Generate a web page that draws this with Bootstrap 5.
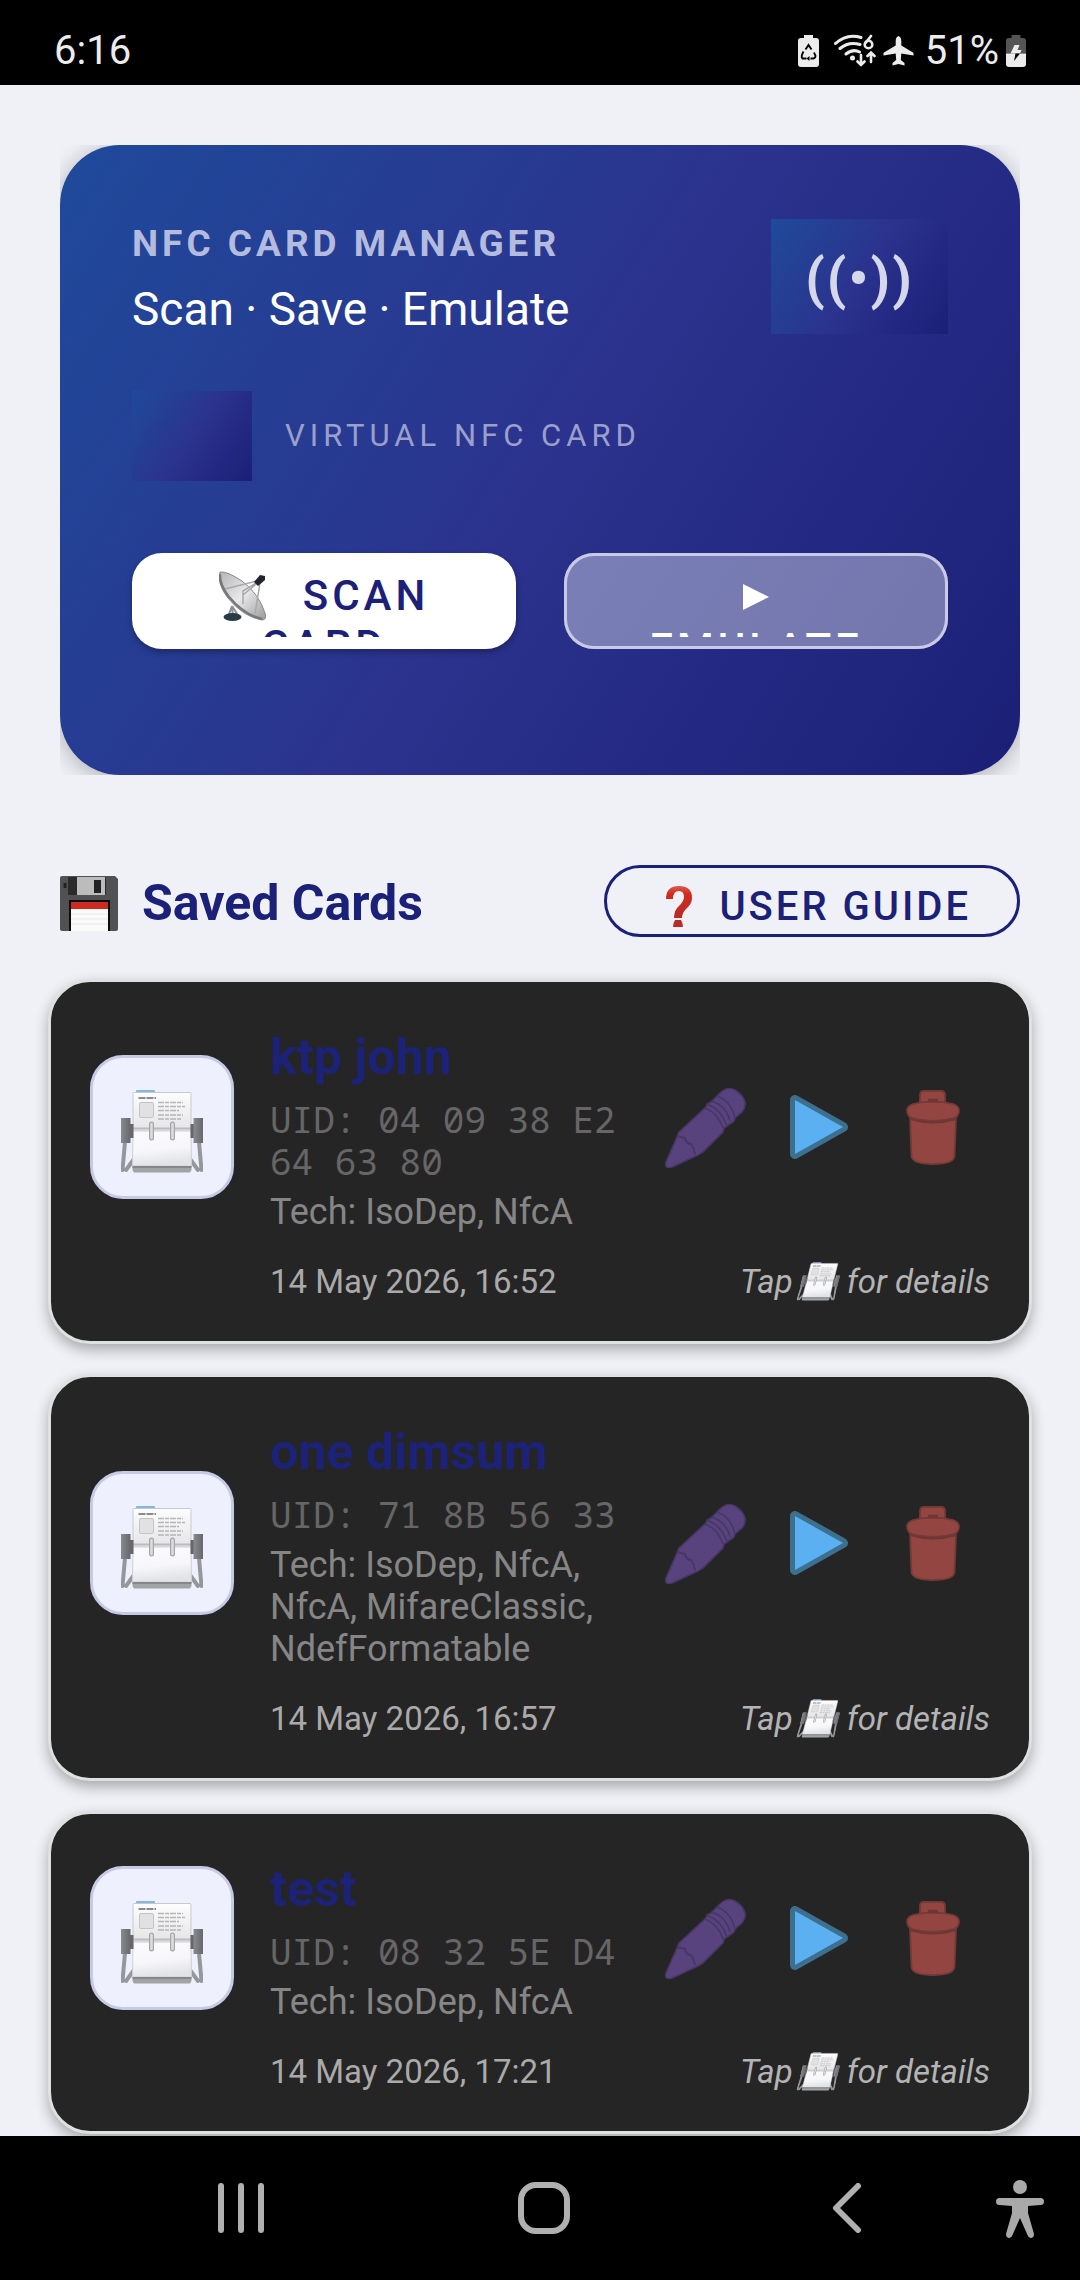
<!DOCTYPE html>
<html lang="en">
<head>
<meta charset="utf-8">
<meta name="viewport" content="width=device-width, initial-scale=1">
<title>NFC Card Manager</title>
<link href="https://cdn.jsdelivr.net/npm/bootstrap@5.3.0/dist/css/bootstrap.min.css" rel="stylesheet">
<style>
  :root { --navy: #1b2178; --fade: #1f4a9b 0%, #2b338e 50%, #1b1f76 100%; }
  body { background: #f0f1f6; font-family: Roboto, "Noto Sans", sans-serif; }
  svg { display: block; flex: none; }

  .statusbar { background: #000; color: #ececec; height: 85px; padding: 16px 54px 0; font-size: 40px; line-height: 70px; }
  .status-icons { gap: 7px; }

  .page { padding: 60px 48px 2px; }

  .hero-clip { margin: 0 12px; overflow: hidden; }
  .hero { min-height: 630px; padding: 74px 72px 0; border-radius: 60px; background: linear-gradient(123deg, var(--fade)); box-shadow: 0 4px 24px rgba(0,0,0,.28); }
  .hero-eyebrow { margin: 0; color: #b3bbde; font-size: 37px; line-height: 50px; font-weight: 700; letter-spacing: 4px; }
  .hero-title { margin: 0; color: #fff; font-size: 46px; line-height: 60px; padding-top: 10px; }
  .wave { background: linear-gradient(123deg, var(--fade)); color: #d5d7ea; width: 177px; height: 115px; font-size: 56px; line-height: 120px; font-weight: 700; letter-spacing: 2px; text-align: center; }
  .chip { background: linear-gradient(124deg, var(--fade)); width: 120px; height: 90px; }
  .chip-row { gap: 33px; margin-top: 52px; }
  .chip-label { color: #9a9fcb; font-size: 31px; letter-spacing: 5px; }
  .hero-actions { gap: 48px; margin-top: 72px; }
  .hero-btn { flex: 1 1 0; height: 96px; padding: 18px 40px 12px; border: 0; border-radius: 30px; font-size: 42px; line-height: 50px; font-weight: 500; letter-spacing: 4px; text-align: center; }
  .hero-btn .label-clip { display: block; height: 66px; overflow: hidden; }
  .hero-btn .label-line { display: flex; justify-content: center; align-items: center; height: 50px; }
  .btn-scan { background: #fff; color: var(--navy); box-shadow: 0 3px 6px rgba(0,0,0,.3); }
  .btn-scan .label-line { gap: 36px; }
  .btn-emulate { background: rgba(255,255,255,.38); color: #fff; box-shadow: inset 0 0 0 3px #c9cbe6; }
  .btn-emulate .label-line { height: 52px; }

  .section-head { margin: 90px 12px 42px; }
  .section-title { margin: 0; padding-top: 4px; gap: 24px; color: var(--navy); font-size: 50px; line-height: 60px; font-weight: 700; }
  .btn-guide { height: 72px; padding: 11px 46px 0 58px; gap: 26px; border: 3px solid var(--navy); border-radius: 36px; background: transparent; color: var(--navy); font-size: 40px; line-height: 56px; font-weight: 500; letter-spacing: 3px; }

  .saved-list { gap: 30px; }
  .saved { padding: 39px 39px 40px; border: 3px solid #dfe0e0; border-radius: 42px; background: #252525; box-shadow: 0 6px 14px rgba(0,0,0,.3); }
  .tile { width: 144px; height: 144px; padding: 8px 0 0; border: 3px solid #c5cae6; border-radius: 33px; background: #eef0fe; }
  .saved-text { padding-left: 36px; min-width: 0; }
  .saved-name { margin: 0 0 12px; padding-top: 6px; color: #1c2277; font-size: 50px; line-height: 60px; font-weight: 700; }
  .saved-uid { margin: 0 0 8px; color: #666; font: 36px/42px "Droid Sans Mono", "Noto Sans Mono", "DejaVu Sans Mono", monospace; }
  .saved-tech { margin: 0; color: #868686; font-size: 36px; line-height: 42px; }
  .saved-foot { margin-top: 29px; padding-left: 180px; color: #aaa; font-size: 33px; line-height: 39px; }
  .saved-hint { gap: 5px; color: #b4b4b4; }
  .slanted { transform: skewX(-14deg); margin: 0 3px; }
  .act { width: 114px; height: 114px; padding: 0; border: 0; background: transparent; }

  .navbar-sys { background: #000; height: 144px; }
  .navbar-sys button { padding: 0; border: 0; background: transparent; }
  .nav-slot { flex: 1 1 0; }
  .nav-inner { padding: 0 82px 0 90px; }
  .nav-access { right: 32px; top: 40px; }
</style>
<script src="https://cdn.jsdelivr.net/npm/bootstrap@5.3.0/dist/js/bootstrap.bundle.min.js"></script>
</head>
<body class="d-flex flex-column min-vh-100">

<svg width="0" height="0" class="position-absolute" aria-hidden="true">
  <defs>
    <linearGradient id="gPage" x1="0" y1="0" x2="0" y2="1"><stop offset="0" stop-color="#fdfdfd"/><stop offset="1" stop-color="#e3e3e5"/></linearGradient>
    <linearGradient id="gFront" x1="0" y1="0" x2="0.2" y2="1"><stop offset="0" stop-color="#fbfbff"/><stop offset=".6" stop-color="#f7f7fb"/><stop offset="1" stop-color="#e2e3e6"/></linearGradient>
    <linearGradient id="gWheel" x1="0" y1="0" x2="1" y2="0"><stop offset="0" stop-color="#8a8b8e"/><stop offset="1" stop-color="#66676a"/></linearGradient>
    <linearGradient id="gDish" x1="0" y1="0" x2="1" y2="1"><stop offset="0" stop-color="#b4b4b6"/><stop offset=".5" stop-color="#e9e9eb"/><stop offset="1" stop-color="#9a9a9c"/></linearGradient>
    <linearGradient id="gRed" x1="0" y1="0" x2="0" y2="1"><stop offset="0" stop-color="#e0584c"/><stop offset=".25" stop-color="#cf2b20"/><stop offset="1" stop-color="#b92c25"/></linearGradient>
    <symbol id="rolodex" viewBox="0 0 82 83">
      <path d="M4 52L1.5 80M5 80L13 69M78 52L80.5 80M77 80L69 69" stroke="#96979a" stroke-width="4" stroke-linecap="round" fill="none"/>
      <rect x="15" y="0" width="19" height="6" rx="1" fill="#85b8df"/>
      <rect x="12" y="2.500" width="58" height="40" rx="1" fill="url(#gPage)" stroke="#c9c9cc"/>
      <path d="M17.500 8H35" stroke="#8b8b8e" stroke-width="2" stroke-dasharray="7 1"/>
      <rect x="18.500" y="12.500" width="14" height="15" rx="1.500" fill="#e1e1e3" stroke="#c4c4c7"/>
      <path d="M37 12.500H62M37 16.500H64M37 20.500H58M37 25H62M37 29H60" stroke="#b5b5b8" stroke-width="1.400" stroke-dasharray="6 1 4 1"/>
      <path d="M12 38.500H70" stroke="#bcbcbf" stroke-width="2"/>
      <path d="M12 41H70L70.500 76H11.500Z" fill="url(#gFront)" stroke="#cfcfd2"/>
      <path d="M11.500 76H70.500V80L69 82.500H13L11.500 80Z" fill="#a2a3a5"/>
      <path d="M11.500 77H70.500" stroke="#7d7e80" stroke-width="1.500"/>
      <path d="M30.500 34V48M51.500 34V48" stroke="#a4a5a8" stroke-width="5" stroke-linecap="round"/>
      <path d="M30.500 34V48M51.500 34V48" stroke="#dedee0" stroke-width="2.500" stroke-linecap="round"/>
      <path d="M9 34H12.500V48H9ZM69.500 34H73V48H69.500Z" fill="#66676a"/>
      <rect x="0" y="28" width="9.500" height="25" fill="url(#gWheel)"/>
      <rect x="72.500" y="28" width="9.500" height="25" fill="url(#gWheel)"/>
    </symbol>
    <symbol id="pencil" viewBox="0 0 81 81">
      <g fill="#59437f" stroke="#463764" stroke-width="1.600" stroke-linejoin="round">
        <path d="M1 79Q0 77 1 75L12 50L14 45L40 21Q42 19 42 17L46 15L55 6Q62 -1 70 3Q78 8 80 15Q81 20 77 25L70 31L69 34L62 39L59 41L58 45L38 65L33 68L5 81Q2 81 1 79Z"/>
        <path d="M40 21Q53 26 58 41M42 17Q57 23 62 39M46 14Q61 18 65 34M52 9Q66 14 70 31" fill="none"/>
        <path d="M12 49L20 51Q21 57 26 57Q29 61 30 67" fill="none" stroke-width="2"/>
      </g>
    </symbol>
    <symbol id="play" viewBox="0 0 58 64">
      <path d="M5 5L53 32L5 59Z" fill="#3d6f8f" stroke="#3d6f8f" stroke-width="10" stroke-linejoin="round"/>
      <path d="M5 5L53 32L5 59Z" fill="#5ab0f0"/>
    </symbol>
    <symbol id="trash" viewBox="0 0 54 75">
      <g fill="#934641" stroke="#743a37" stroke-width="1.800">
        <path d="M4 27H50L48.500 66Q48 74 27 74T5.500 66Z"/>
        <path d="M14 14V5Q14 1 18 1H35Q39 1 39 5V14Z"/>
        <path d="M7 14Q27 9 47 14Q53 16 53 20.500Q53 26 48 28Q27 34 6 28Q1 26 1 20.500Q1 16 7 14Z"/>
      </g>
      <path d="M4 29Q27 36 50 29" stroke="#6d3633" stroke-width="2" fill="none"/>
      <path d="M22 10.500H32" stroke="#6d3633" stroke-width="3.500"/>
    </symbol>
  </defs>
</svg>

<header class="statusbar d-flex justify-content-between">
  <span>6:16</span>
  <div class="d-flex align-items-center status-icons">
    <svg class="me-2" width="21" height="32" viewBox="0 0 21 32"><path d="M6 0H15V3H18Q21 3 21 6V29Q21 32 18 32H3Q0 32 0 29V6Q0 3 3 3H6Z" fill="#ececec"/><path d="M7.500 14.500L10.500 10L13.500 14.500M16 17.500L17.500 21Q17.500 24 12.500 23.500M8.500 23.500H4.500Q2.500 22 5.500 16.500" stroke="#000" stroke-width="1.900" fill="none"/><path d="M11.500 21V26L8.500 23.500Z"/></svg>
    <svg width="42" height="34" viewBox="0 0 42 34" fill="none" stroke="#ececec" stroke-width="3" stroke-linecap="round"><path d="M1.500 9.500Q13 -1 27 3.500M6 14.500Q15 7 26 10.500M12 20Q19 14.500 25.500 18"/><circle cx="18.500" cy="24" r="1" fill="#ececec"/><path d="M27 21V31M23.500 27.500L27 31L30.500 27.500M37 28V19M33.500 22L37 18.500L40.500 22M37 2L31.500 9" stroke-width="2.600"/><circle cx="34.500" cy="10.500" r="3.800" stroke-width="2.600"/></svg>
    <svg width="31" height="30" viewBox="0 0 31 30"><path d="M15.500 0Q18.300 1 18.300 5V9.500L30 16.500Q31 17.500 30.500 19.500L18.300 17.500L17.800 24L21.500 27V29.500L15.500 28L9.500 29.500V27L13.200 24L12.700 17.500L.5 19.500Q0 17.500 1 16.500L12.700 9.500V5Q12.700 1 15.500 0Z" fill="#ececec"/></svg>
    <span class="ps-1">51%</span>
    <svg width="20" height="32" viewBox="0 0 20 32"><path d="M5.500 0H14.500V3H17Q20 3 20 6V18.500H0V6Q0 3 3 3H5.500Z" fill="#555"/><path d="M0 18.500H20V29Q20 32 17 32H3Q0 32 0 29Z" fill="#ececec"/><path d="M8.500 10H13.500L11.500 15H15.500L14 18.500H4.500Z" fill="#ececec"/><path d="M9.500 18.500H14L8 26Z" fill="#000"/></svg>
  </div>
</header>

<main class="page flex-grow-1">
  <section class="hero-clip">
    <div class="hero">
      <div class="d-flex justify-content-between">
        <div>
          <p class="hero-eyebrow">NFC CARD MANAGER</p>
          <h1 class="hero-title fw-normal">Scan · Save · Emulate</h1>
        </div>
        <div class="wave">((•))</div>
      </div>
      <div class="chip-row d-flex align-items-center">
        <div class="chip"></div>
        <span class="chip-label">VIRTUAL NFC CARD</span>
      </div>
      <div class="hero-actions d-flex">
        <button type="button" class="hero-btn btn-scan"><span class="label-clip">
          <span class="label-line">
            <svg width="48" height="50" viewBox="0 0 48 50"><path d="M13 35L9 46M13 35L14 46M13 35L20 46" stroke="#8a9096" stroke-width="2"/><ellipse cx="13.500" cy="46" rx="9" ry="4" fill="#2a3a46"/><path d="M1 1Q-2 12 8 26Q24 46 43 49Q48 49 46 42Q40 23 23 10Q8 0 1 1Z" fill="url(#gDish)" stroke="#8b8b8d"/><path d="M1 3Q0 13 10 26Q25 44 43 48" stroke="#77787a" stroke-width="2.500" fill="none"/><path d="M6 18L42 9L24 20V33M42 9L24 24M41 12L36 43" stroke="#a8a9ab" stroke-width="1.500" fill="none"/><path d="M35 11L41 4L46 5V9L39 15Z" fill="#20242c"/></svg>
            <span>SCAN</span>
          </span>
          <span class="label-line">CARD</span>
        </span></button>
        <button type="button" class="hero-btn btn-emulate"><span class="label-clip">
          <span class="label-line"><svg width="26" height="26" viewBox="0 0 26 26"><path d="M0 0L26 13L0 26Z" fill="#fff"/></svg></span>
          <span class="label-line">EMULATE</span>
        </span></button>
      </div>
    </div>
  </section>

  <div class="section-head d-flex justify-content-between align-items-center">
    <h2 class="section-title d-flex align-items-center">
      <svg width="58" height="55" viewBox="0 0 58 55"><path d="M2 0H55L58 3V53Q58 55 56 55H2Q0 55 0 53V2Q0 0 2 0Z" fill="#505153"/><rect x="8" y="1" width="38" height="18" rx="1" fill="#2b2b2c"/><rect x="17" y="1" width="28" height="18" fill="#bcbcbd"/><rect x="34" y="4" width="7" height="13" fill="#222"/><rect x="9" y="24" width="41" height="31" fill="#0c0c0c"/><rect x="11" y="26" width="37" height="29" fill="#fafafa"/><rect x="11" y="26" width="37" height="7" fill="#cc2b20"/><path d="M11 38H48M11 43H48M11 48H48" stroke="#e8e8ea"/><path d="M5 7V12" stroke="#222" stroke-width="3"/></svg>
      Saved Cards
    </h2>
    <button type="button" class="btn-guide d-flex align-items-center">
      <svg width="28" height="42" viewBox="0 0 28 42"><path d="M1 13Q1 0 14 0Q27 0 27 12Q27 18 21 23Q17 27 17 32H9Q9 24 14 20Q19 15 19 11Q19 5 14 5Q8 5 8 13Z" fill="url(#gRed)"/><path d="M10 34H16Q18 37 18 41H8Q8 37 10 34Z" fill="#b92c25"/></svg>
      <span>USER GUIDE</span>
    </button>
  </div>

  <div class="saved-list d-flex flex-column">
    <article class="saved">
      <div class="d-flex align-items-center">
        <button type="button" class="tile d-flex align-items-center justify-content-center flex-shrink-0" aria-label="Details"><svg width="82" height="83"><use href="#rolodex"/></svg></button>
        <div class="saved-text flex-grow-1">
          <h3 class="saved-name">ktp john</h3>
          <p class="saved-uid">UID: 04 09 38 E2 64 63 80</p>
          <p class="saved-tech">Tech: IsoDep, NfcA</p>
        </div>
        <div class="d-flex flex-shrink-0">
          <button type="button" class="act d-flex align-items-center justify-content-center" aria-label="Edit"><svg width="81" height="81"><use href="#pencil"/></svg></button>
          <button type="button" class="act d-flex align-items-center justify-content-center" aria-label="Emulate"><svg width="58" height="64"><use href="#play"/></svg></button>
          <button type="button" class="act d-flex align-items-center justify-content-center" aria-label="Delete"><svg width="54" height="75"><use href="#trash"/></svg></button>
        </div>
      </div>
      <div class="saved-foot d-flex justify-content-between">
        <span>14 May 2026, 16:52</span>
        <span class="saved-hint d-flex align-items-center fst-italic">Tap <svg class="slanted" width="38" height="39"><use href="#rolodex"/></svg> for details</span>
      </div>
    </article>

    <article class="saved">
      <div class="d-flex align-items-center">
        <button type="button" class="tile d-flex align-items-center justify-content-center flex-shrink-0" aria-label="Details"><svg width="82" height="83"><use href="#rolodex"/></svg></button>
        <div class="saved-text flex-grow-1">
          <h3 class="saved-name">one dimsum</h3>
          <p class="saved-uid">UID: 71 8B 56 33</p>
          <p class="saved-tech">Tech: IsoDep, NfcA, NfcA, MifareClassic, NdefFormatable</p>
        </div>
        <div class="d-flex flex-shrink-0">
          <button type="button" class="act d-flex align-items-center justify-content-center" aria-label="Edit"><svg width="81" height="81"><use href="#pencil"/></svg></button>
          <button type="button" class="act d-flex align-items-center justify-content-center" aria-label="Emulate"><svg width="58" height="64"><use href="#play"/></svg></button>
          <button type="button" class="act d-flex align-items-center justify-content-center" aria-label="Delete"><svg width="54" height="75"><use href="#trash"/></svg></button>
        </div>
      </div>
      <div class="saved-foot d-flex justify-content-between">
        <span>14 May 2026, 16:57</span>
        <span class="saved-hint d-flex align-items-center fst-italic">Tap <svg class="slanted" width="38" height="39"><use href="#rolodex"/></svg> for details</span>
      </div>
    </article>

    <article class="saved">
      <div class="d-flex align-items-center">
        <button type="button" class="tile d-flex align-items-center justify-content-center flex-shrink-0" aria-label="Details"><svg width="82" height="83"><use href="#rolodex"/></svg></button>
        <div class="saved-text flex-grow-1">
          <h3 class="saved-name">test</h3>
          <p class="saved-uid">UID: 08 32 5E D4</p>
          <p class="saved-tech">Tech: IsoDep, NfcA</p>
        </div>
        <div class="d-flex flex-shrink-0">
          <button type="button" class="act d-flex align-items-center justify-content-center" aria-label="Edit"><svg width="81" height="81"><use href="#pencil"/></svg></button>
          <button type="button" class="act d-flex align-items-center justify-content-center" aria-label="Emulate"><svg width="58" height="64"><use href="#play"/></svg></button>
          <button type="button" class="act d-flex align-items-center justify-content-center" aria-label="Delete"><svg width="54" height="75"><use href="#trash"/></svg></button>
        </div>
      </div>
      <div class="saved-foot d-flex justify-content-between">
        <span>14 May 2026, 17:21</span>
        <span class="saved-hint d-flex align-items-center fst-italic">Tap <svg class="slanted" width="38" height="39"><use href="#rolodex"/></svg> for details</span>
      </div>
    </article>
  </div>
</main>

<nav class="navbar-sys position-relative" aria-label="System">
  <div class="nav-inner d-flex h-100 align-items-center">
    <button type="button" class="nav-slot d-flex justify-content-center" aria-label="Recent apps"><svg width="46" height="50" viewBox="0 0 46 50" stroke="#b0b0b0" stroke-width="6" stroke-linecap="round"><path d="M3 3V47M23 3V47M43 3V47"/></svg></button>
    <button type="button" class="nav-slot d-flex justify-content-center" aria-label="Home"><svg width="52" height="52" viewBox="0 0 52 52"><rect x="3" y="3" width="46" height="46" rx="15" fill="none" stroke="#b0b0b0" stroke-width="6"/></svg></button>
    <button type="button" class="nav-slot d-flex justify-content-center" aria-label="Back"><svg width="30" height="50" viewBox="0 0 30 50"><path d="M26 3L4 25L26 47" fill="none" stroke="#b0b0b0" stroke-width="6" stroke-linecap="round" stroke-linejoin="round"/></svg></button>
  </div>
  <button type="button" class="nav-access position-absolute" aria-label="Accessibility"><svg class="m-1" width="48" height="58" viewBox="0 0 48 58" fill="#a9a9a9"><circle cx="24" cy="7" r="7"/><path d="M3.500 18H44.500Q48 18 48 21.500T44.500 25L32 26V33L38 54Q38 58 34.500 58Q32.500 58 31.500 55L24 38L16.500 55Q15.500 58 13.500 58Q10 58 10 54L16 33V26L3.500 25Q0 25 0 21.500T3.500 18Z"/></svg></button>
</nav>
</body>
</html>
